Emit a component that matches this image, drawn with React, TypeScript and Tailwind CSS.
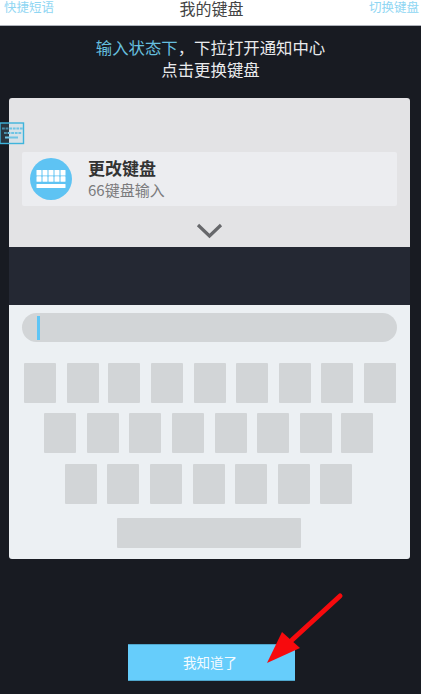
const FONT = "font-['Noto_Sans_CJK_SC','Noto_Sans',sans-serif]";

function KeyRow({ widths, className }: { widths: number[]; className: string }) {
  return (
    <div className={`flex h-10 ${className}`}>
      {widths.map((gap, i) => (
        <div key={i} className="h-full w-8 shrink-0 rounded-[1px] bg-[#d2d5d7]" style={{ marginLeft: gap }} />
      ))}
    </div>
  );
}

function KeyboardGlyph() {
  return (
    <svg width="30" height="18" viewBox="0 0 30 18" fill="#ffffff">
      {[0, 1].map((r) =>
        [0, 1, 2, 3, 4].map((c) => (
          <rect key={`${r}-${c}`} x={0.5 + c * 6} y={r * 6.3} width="5" height="5.5" rx="0.6" />
        )),
      )}
      <rect x="0.5" y="14" width="29" height="4" rx="0.5" />
    </svg>
  );
}

export default function App() {
  return (
    <div className={`relative h-[694px] w-[421px] overflow-hidden bg-[#181b22] ${FONT}`}>
      <header className="flex h-[26px] items-start justify-between border-b border-[#aeb2ba] bg-white pr-[2px] pl-1">
        <span className="text-[12.5px] leading-[14px] text-[#8fd6f3]">快捷短语</span>
        <span className="text-[16px] leading-[16px] text-[#444444]">我的键盘</span>
        <span className="text-[12.5px] leading-[14px] text-[#8fd6f3]">切换键盘</span>
      </header>

      <div className="pt-[10px] text-center text-[16.4px] leading-[22px] text-[#e9eaec]">
        <p>
          <span className="text-[#66bede]">输入状态下</span>，下拉打开通知中心
        </p>
        <p>点击更换键盘</p>
      </div>

      <main className="mx-[9px] mt-[18px] h-[461px] w-[401px] overflow-hidden rounded-[3px]">
        <section className="flex h-[149px] flex-col bg-[#e3e3e5] px-[13px] pt-[54px]">
          <div className="flex h-[54px] items-center rounded-[2px] bg-[#ecedf0] pl-2">
            <div className="flex h-[42px] w-[42px] shrink-0 items-center justify-center rounded-full bg-[#5ec3f3]">
              <KeyboardGlyph />
            </div>
            <div className="-mt-[2px] ml-4">
              <div className="text-[17px] leading-[24px] font-bold text-[#333333]">更改键盘</div>
              <div className="text-[15px] leading-[20px] text-[#7b7b7d]">66键盘输入</div>
            </div>
          </div>
          <div className="mt-[17px] flex justify-center">
            <svg width="27" height="16" viewBox="0 0 27 16" fill="none" stroke="#67686b" strokeWidth="3.2">
              <path d="M2 2 L13.5 13 L25 2" />
            </svg>
          </div>
        </section>

        <section className="h-[58px] bg-[#242833]" />

        <section className="h-[254px] bg-[#ecf0f3] pt-2">
          <div className="mx-[13px] flex h-[29px] items-center rounded-full bg-[#d2d5d7] pl-[15px]">
            <div className="h-6 w-[3px] bg-[#5ec5f5]" />
          </div>
          <KeyRow className="mt-[21px]" widths={[15, 11, 9, 11, 11, 10, 11, 10, 11]} />
          <KeyRow className="mt-[10px]" widths={[35, 11, 10, 11, 11, 10, 11, 9]} />
          <KeyRow className="mt-[11px]" widths={[56, 10, 11, 11, 10, 11, 10]} />
          <div className="mt-[14px] ml-[108px] h-[30px] w-[184px] rounded-[1px] bg-[#d2d5d7]" />
        </section>
      </main>

      <div className="mt-[85px] ml-[128px] flex h-[37px] w-[167px] items-center justify-center border-y border-[#4fa6cc] bg-[#66cdfb] pr-[3px] text-[13.5px] text-[#f4fbff]">
        我知道了
      </div>

      <svg className="absolute top-[120px] left-0" width="26" height="26" viewBox="0 0 26 26" fill="none">
        <rect x="0" y="3" width="23.5" height="20.5" fill="#8fd6f3" fillOpacity="0.15" stroke="#3fb4dc" strokeWidth="1.4" />
        {[0, 1, 2, 3, 4, 5].map((i) => (
          <rect key={`a${i}`} x={2 + i * 3.6} y="7.5" width="2.8" height="2" fill={i < 2 ? "#4b8ea8" : "#6fc4e4"} />
        ))}
        {[0, 1, 2, 3, 4].map((i) => (
          <rect key={`b${i}`} x={4 + i * 3.6} y="12" width="2.8" height="2" fill={i < 1 ? "#4b8ea8" : "#6fc4e4"} />
        ))}
        <rect x="5" y="16.5" width="13" height="2" fill="#6fc4e4" />
      </svg>

      <svg className="absolute top-[590px] left-[262px]" width="84" height="76" viewBox="0 0 84 76" fill="#f70a0d">
        <path d="M78 6 L30 50" stroke="#f70a0d" strokeWidth="5" strokeLinecap="round" fill="none" />
        <path d="M5 73 L20 42 L38 58 Z" />
      </svg>
    </div>
  );
}
